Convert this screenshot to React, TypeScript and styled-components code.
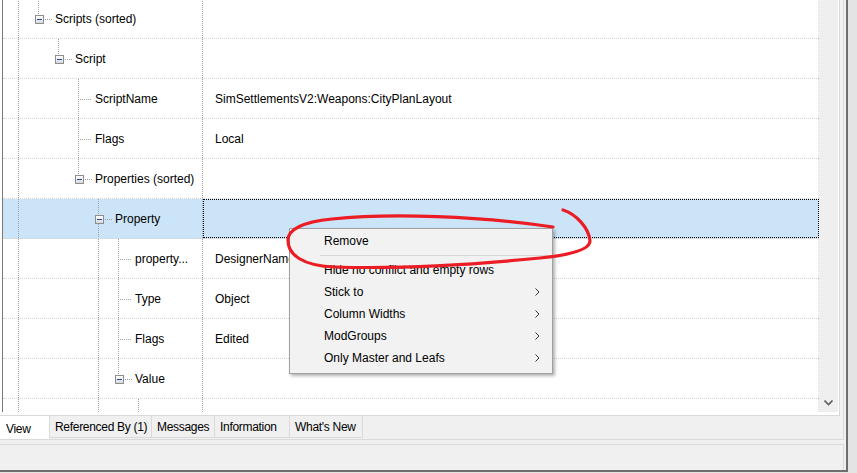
import styled, { createGlobalStyle } from 'styled-components';

const GlobalStyle = createGlobalStyle`
  html, body {
    margin: 0;
    padding: 0;
  }
  body {
    background: #e4e4e4;
    font-family: 'Segoe UI', 'Liberation Sans', Arial, sans-serif;
    font-size: 12px;
    color: #000;
    overflow: hidden;
  }
`;

interface RowData {
    label: string;
    level: number;
    open?: boolean;
    next?: boolean;
    guides?: number[];
    value?: string;
    selected?: boolean;
}

const rows: RowData[] = [
    { label: 'Scripts (sorted)', level: 0, open: true },
    { label: 'Script', level: 1, open: true },
    { label: 'ScriptName', level: 2, next: true, value: 'SimSettlementsV2:Weapons:CityPlanLayout' },
    { label: 'Flags', level: 2, next: true, value: 'Local' },
    { label: 'Properties (sorted)', level: 2, open: true },
    { label: 'Property', level: 3, open: true, next: true, selected: true },
    { label: 'property...', level: 4, next: true, guides: [3], value: 'DesignerName' },
    { label: 'Type', level: 4, next: true, guides: [3], value: 'Object' },
    { label: 'Flags', level: 4, next: true, guides: [3], value: 'Edited' },
    { label: 'Value', level: 4, open: true, guides: [3] },
    { label: '', level: 5, next: true, guides: [3] },
];

const menuItems = [
    { label: 'Hide no conflict and empty rows' },
    { label: 'Stick to', sub: true },
    { label: 'Column Widths', sub: true },
    { label: 'ModGroups', sub: true },
    { label: 'Only Master and Leafs', sub: true },
];

const tabs = [
    { label: 'View', width: 49 },
    { label: 'Referenced By (1)', width: 103 },
    { label: 'Messages', width: 64 },
    { label: 'Information', width: 76 },
    { label: "What's New", width: 74 },
];

const GuideSlot = function ({ line }: { line: boolean }) {
    return (
        <SlotSvg width={20} height={39}>
            {line && <DotLine x1={9.5} y1={0} x2={9.5} y2={39} />}
        </SlotSvg>
    );
};

const NodeSlot = function ({ open, next }: { open?: boolean; next?: boolean }) {
    if (!open) {
        return (
            <SlotSvg width={26} height={39}>
                <DotLine x1={9.5} y1={0} x2={9.5} y2={next ? 39 : 20} />
                <DotLine x1={11} y1={20.5} x2={22} y2={20.5} />
            </SlotSvg>
        );
    }
    return (
        <SlotSvg width={26} height={39}>
            <defs>
                <linearGradient id="exp" x1="0" y1="0" x2="0" y2="1">
                    <stop offset="0" stopColor="#ffffff" />
                    <stop offset="1" stopColor="#d6d6d6" />
                </linearGradient>
            </defs>
            <DotLine x1={9.5} y1={0} x2={9.5} y2={16} />
            {next && <DotLine x1={9.5} y1={25} x2={9.5} y2={39} />}
            <DotLine x1={16} y1={20.5} x2={23} y2={20.5} />
            <rect x={6.5} y={16.5} width={8} height={8} fill="url(#exp)" stroke="#8e8e8e" />
            <line x1={8} y1={20.5} x2={13} y2={20.5} stroke="#2a4aa0" />
        </SlotSvg>
    );
};

const TreeRow = function ({ row }: { row: RowData }) {
    const guides = [];
    for (let a = 0; a < row.level; a++) {
        guides.push(<GuideSlot key={a} line={!!row.guides?.includes(a)} />);
    }
    return (
        <Row $selected={row.selected}>
            <IndicatorCell />
            <TreeCell>
                {guides}
                <NodeSlot open={row.open} next={row.next} />
                <Label>{row.label}</Label>
            </TreeCell>
            <ValueCell $focused={row.selected}>{row.value}</ValueCell>
        </Row>
    );
};

export default function App() {
    return (
        <>
            <GlobalStyle />
            <Window>
                <TabFrame>
                    <Page>
                        <TreeBox>
                            <Rows>
                                {rows.map((r, i) => (
                                    <TreeRow key={i} row={r} />
                                ))}
                            </Rows>
                            <ScrollBar>
                                <ScrollButton>
                                    <svg width="9" height="6" viewBox="0 0 9 6">
                                        <path d="M0.5 0.5 L4.5 4.5 L8.5 0.5" fill="none" stroke="#606060" strokeWidth="1.6" />
                                    </svg>
                                </ScrollButton>
                            </ScrollBar>
                        </TreeBox>
                    </Page>
                    <TabStrip>
                        {tabs.map((t, i) => (
                            <Tab key={t.label} $active={i === 0} $width={t.width}>
                                {t.label}
                            </Tab>
                        ))}
                    </TabStrip>
                </TabFrame>
                <StatusBar />

                <Menu>
                    <MenuItem>Remove</MenuItem>
                    <MenuSeparator />
                    {menuItems.map((m) => (
                        <MenuItem key={m.label}>
                            {m.label}
                            {m.sub && (
                                <svg width="5" height="8" viewBox="0 0 5 8">
                                    <path d="M0.5 0.5 L4 4 L0.5 7.5" fill="none" stroke="#333" strokeWidth="1" />
                                </svg>
                            )}
                        </MenuItem>
                    ))}
                </Menu>

                <Scribble width="857" height="473" viewBox="0 0 857 473">
                    <path
                        d="M553 227 C480 216 390 213 332 219 C302 222 288 230 288 240 C288 255 303 266 335 267 C400 269 480 264 540 258 C570 255 590 250 590 241 C589 228 576 214 563 210"
                        fill="none"
                        stroke="#ec1c24"
                        strokeWidth="3.2"
                        strokeLinecap="round"
                    />
                </Scribble>
            </Window>
        </>
    );
}

const Window = styled.div`
    position: relative;
    width: 846px;
    height: 470px;
    background: #f0f0f0;
    border-right: 2px solid #6e6e6e;
    border-bottom: 2px solid #6e6e6e;
    display: flex;
    flex-direction: column;
`;

const TabFrame = styled.div`
    width: 843px;
    height: 439px;
    border-right: 1px solid #dadada;
    border-bottom: 1px solid #dadada;
    display: flex;
    flex-direction: column;
`;

const Page = styled.div`
    width: 839px;
    height: 415px;
    background: #fff;
    border-right: 1px solid #dadada;
    border-bottom: 1px solid #dadada;
`;

const TreeBox = styled.div`
    margin-left: 2px;
    height: 412px;
    border-left: 1px solid #7a7a7a;
    display: flex;
    overflow: hidden;
`;

const Rows = styled.div`
    width: 816px;
    margin-top: -1px;
    overflow: hidden;
`;

const Row = styled.div<{ $selected?: boolean }>`
    display: grid;
    grid-template-columns: 16px 184px 616px;
    height: 40px;
    box-sizing: border-box;
    border-bottom: 1px dotted #d4d4d4;
    background: ${({ $selected }) => ($selected ? '#cce4f7' : 'transparent')};
`;

const IndicatorCell = styled.div`
    border-right: 1px dotted #a0a0a0;
`;

const TreeCell = styled.div`
    display: flex;
    padding-left: 10px;
    border-right: 1px dotted #a0a0a0;
    overflow: hidden;
`;

const SlotSvg = styled.svg`
    flex: none;
    display: block;
    shape-rendering: crispEdges;
`;

const DotLine = styled.line`
    stroke: #a0a0a0;
    stroke-dasharray: 1 1;
`;

const Label = styled.span`
    display: flex;
    align-items: center;
    white-space: nowrap;
    padding-top: 1px;
`;

const ValueCell = styled.div<{ $focused?: boolean }>`
    display: flex;
    align-items: center;
    padding: 1px 0 0 12px;
    white-space: nowrap;
    border-right: 1px dotted #dcdcdc;
    outline: ${({ $focused }) => ($focused ? '1px dotted #000' : 'none')};
    outline-offset: -1px;
`;

const ScrollBar = styled.div`
    width: 19px;
    background: #efefef;
    display: flex;
    flex-direction: column;
    justify-content: flex-end;
`;

const ScrollButton = styled.div`
    height: 17px;
    display: flex;
    align-items: center;
    justify-content: center;
    padding-bottom: 1px;
`;

const TabStrip = styled.div`
    display: flex;
    height: 23px;
`;

const Tab = styled.div<{ $active?: boolean; $width: number }>`
    box-sizing: border-box;
    width: ${({ $width }) => $width}px;
    flex: none;
    height: ${({ $active }) => ($active ? '23px' : '22px')};
    padding: ${({ $active }) => ($active ? '4px 0 0 6px' : '2px 0 0 5px')};
    background: ${({ $active }) => ($active ? '#fff' : '#f0f0f0')};
    border: ${({ $active }) => ($active ? 'none' : '1px solid #dadada')};
    border-top: none;
    margin-left: ${({ $active }) => ($active ? '0' : '-1px')};
    white-space: nowrap;
    overflow: hidden;
    line-height: 18px;
    letter-spacing: -0.3px;

    &:nth-child(2) {
        margin-left: 0;
    }
`;

const StatusBar = styled.div`
    margin-top: 4px;
    width: 843px;
    height: 25px;
    border-top: 1px solid #dadada;
    border-right: 1px solid #dadada;
`;

const Menu = styled.div`
    position: absolute;
    left: 289px;
    top: 228px;
    width: 262px;
    padding: 1px 0 4px;
    background: #f2f2f2;
    border: 1px solid #a0a0a0;
    box-shadow: 2px 2px 3px rgba(0, 0, 0, 0.3);
`;

const MenuItem = styled.div`
    height: 22px;
    display: flex;
    align-items: center;
    justify-content: space-between;
    padding: 0 12px 0 34px;
    white-space: nowrap;
`;

const MenuSeparator = styled.div`
    height: 1px;
    background: #d7d7d7;
    margin: 3px 1px 3px 30px;
`;

const Scribble = styled.svg`
    position: absolute;
    left: 0;
    top: 0;
    pointer-events: none;
`;
